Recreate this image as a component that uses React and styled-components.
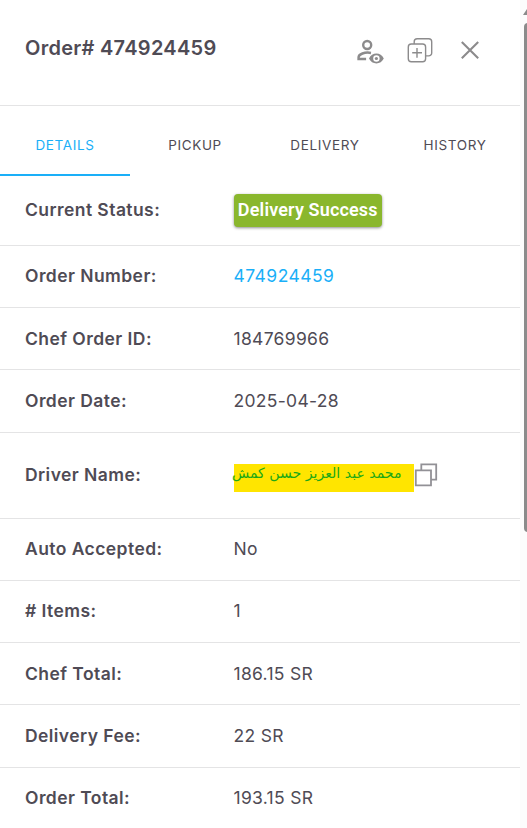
import React from "react";
import styled, { createGlobalStyle } from "styled-components";

const GlobalStyle = createGlobalStyle`
  * { box-sizing: border-box; }
  html, body { margin: 0; background: #fff; overflow: hidden; }
`;

const Page = styled.div`
  display: flex;
  width: 527px;
  height: 828px;
  overflow: hidden;
  background: #fff;
  color: #4f4b55;
  font-family: Inter, sans-serif;
`;

const Panel = styled.main`
  width: 520px;
  flex: none;
`;

const Header = styled.header`
  display: flex;
  align-items: flex-start;
  justify-content: space-between;
  height: 106px;
  padding: 34px 35px 0 25px;
  border-bottom: 1px solid #e4e4e5;
`;

const Title = styled.h1`
  margin: 0;
  font-size: 20px;
  line-height: 28px;
  font-weight: 600;
  letter-spacing: 0.28px;
`;

const Actions = styled.div`
  display: flex;
  gap: 20px;
`;

const IconButton = styled.button`
  display: flex;
  width: 30px;
  height: 32px;
  padding: 0;
  border: 0;
  background: none;
  color: #8c8b8c;

  svg { display: block; }
`;

const Tabs = styled.nav`
  display: grid;
  grid-template-columns: repeat(4, 130px);
  height: 70px;
`;

const Tab = styled.button`
  height: 70px;
  padding: 10px 0 0;
  border: 0;
  border-bottom: 2px solid ${({ $active }) => ($active ? "#1aaff8" : "transparent")};
  background: none;
  color: ${({ $active }) => ($active ? "#1aaff8" : "#4f4b55")};
  font: 400 13.5px/20px Inter, sans-serif;
  letter-spacing: 0.65px;
`;

const Details = styled.dl`
  margin: 0;
`;

const Row = styled.div`
  display: grid;
  grid-template-columns: 208.5px 1fr;
  align-items: center;
  height: ${({ $height }) => $height}px;
  padding: 0 0 ${({ $raised }) => ($raised ? 2 : 0)}px 25px;
  border-bottom: 1px solid #e4e4e5;
  font-size: 17.5px;
  line-height: 24px;
`;

const Label = styled.dt`
  font-weight: 600;
  letter-spacing: 0.43px;
`;

const Value = styled.dd`
  display: flex;
  align-items: center;
  margin: 0;
  letter-spacing: 0.3px;
`;

const OrderLink = styled.a`
  color: #1aaff8;
  letter-spacing: 0.45px;
`;

const Badge = styled.span`
  width: 148.5px;
  height: 33px;
  margin-top: 2px;
  border-radius: 4px;
  background: #8ab72d;
  box-shadow: 0 1px 3px rgba(0, 0, 0, 0.45);
  color: #fff;
  font: 600 18px/32px Roboto, sans-serif;
  letter-spacing: 0.15px;
  text-align: center;
  white-space: nowrap;
`;

const DriverName = styled.span`
  width: 180px;
  height: 28px;
  margin-top: 7px;
  padding-right: 12px;
  background: #ffe500;
  color: #20a916;
  direction: rtl;
  font: 400 14.1px/18px "DejaVu Sans", sans-serif;
  letter-spacing: 0;
  white-space: nowrap;
`;

const CopyIcon = styled.svg`
  width: 24px;
  height: 24px;
  color: #929196;
`;

const ScrollTrack = styled.aside`
  width: 7px;
  flex: none;
  background: #fcfcfc;
  overflow: hidden;

  svg { display: block; margin-left: 3px; }
`;

const ScrollThumb = styled.div`
  width: 8px;
  height: 509px;
  margin: 7px 0 0 4px;
  border-radius: 4px;
  background: #8b8b8b;
`;

const PersonEye = () => (
  <svg width="30" height="32" viewBox="355 34 30 32" fill="none" stroke="currentColor">
    <circle cx="367.2" cy="45" r="4" strokeWidth="2.4" />
    <path d="M371 52.9C364.7 51.8 358.6 54.2 358.6 57.3v1.7h7.5" strokeWidth="2.5" />
    <path fillRule="evenodd" stroke="none" fill="currentColor" d="M369 58.5c1.5-3.2 4.2-4.9 7.4-4.9s5.8 1.7 7.4 4.9c-1.6 3.2-4.2 4.9-7.4 4.9s-5.9-1.7-7.4-4.9Zm7.4-3.2a3.2 3.2 0 1 0 0 6.4 3.2 3.2 0 0 0 0-6.4Z" />
    <circle cx="376.4" cy="58.5" r="1.6" fill="currentColor" stroke="none" />
  </svg>
);

const Duplicate = () => (
  <svg width="30" height="32" viewBox="405 34 30 32" fill="none" stroke="currentColor" strokeWidth="1.4">
    <rect x="408.3" y="44" width="17.3" height="17.7" rx="3" />
    <path d="M414.2 44v-2.3a3 3 0 0 1 3-3h11.5a3 3 0 0 1 3 3v11.2a3 3 0 0 1-3 3h-3.1M412.2 52.8h9.8M417 48v9.7" />
  </svg>
);

const Close = () => (
  <svg width="30" height="32" viewBox="455 34 30 32" fill="none" stroke="currentColor" strokeWidth="2.1">
    <path d="m461.8 42 16.4 16.2m0-16.2-16.4 16.2" />
  </svg>
);

const tabs = ["DETAILS", "PICKUP", "DELIVERY", "HISTORY"];

const rows = [
  { label: "Current Status:", value: <Badge>Delivery Success</Badge>, height: 70, raised: true },
  { label: "Order Number:", value: <OrderLink>474924459</OrderLink>, height: 62, raised: true },
  { label: "Chef Order ID:", value: "184769966", height: 62 },
  { label: "Order Date:", value: "2025-04-28", height: 63 },
  {
    label: "Driver Name:",
    value: (
      <>
        <DriverName lang="ar">محمد عبد العزيز حسن كمش</DriverName>
        <CopyIcon viewBox="0 0 24 24" fill="none" stroke="currentColor" strokeWidth="1.8">
          <path d="M1.8 7.4h15.2v14.9H1.8zM7.3 7.4V1.3h14.9v15.4h-5" />
        </CopyIcon>
      </>
    ),
    height: 86,
    raised: true,
  },
  { label: "Auto Accepted:", value: "No", height: 62, raised: true },
  { label: "# Items:", value: "1", height: 62, raised: true },
  { label: "Chef Total:", value: "186.15 SR", height: 62 },
  { label: "Delivery Fee:", value: "22 SR", height: 63 },
  { label: "Order Total:", value: "193.15 SR", height: 62, raised: true },
];

export default function App() {
  return (
    <Page>
      <GlobalStyle />
      <Panel>
        <Header>
          <Title>Order# 474924459</Title>
          <Actions>
            <IconButton aria-label="View customer"><PersonEye /></IconButton>
            <IconButton aria-label="Duplicate order"><Duplicate /></IconButton>
            <IconButton aria-label="Close"><Close /></IconButton>
          </Actions>
        </Header>
        <Tabs>
          {tabs.map((tab, i) => <Tab key={tab} $active={i === 0}>{tab}</Tab>)}
        </Tabs>
        <Details>
          {rows.map(({ label, value, height, raised }) => (
            <Row key={label} $height={height} $raised={raised}>
              <Label>{label}</Label>
              <Value>{value}</Value>
            </Row>
          ))}
        </Details>
      </Panel>
      <ScrollTrack>
        <svg width="8" height="16" viewBox="0 0 8 16" fill="#8b8b8b">
          <path d="M0 15 4 9h4v6Z" />
        </svg>
        <ScrollThumb />
      </ScrollTrack>
    </Page>
  );
}
